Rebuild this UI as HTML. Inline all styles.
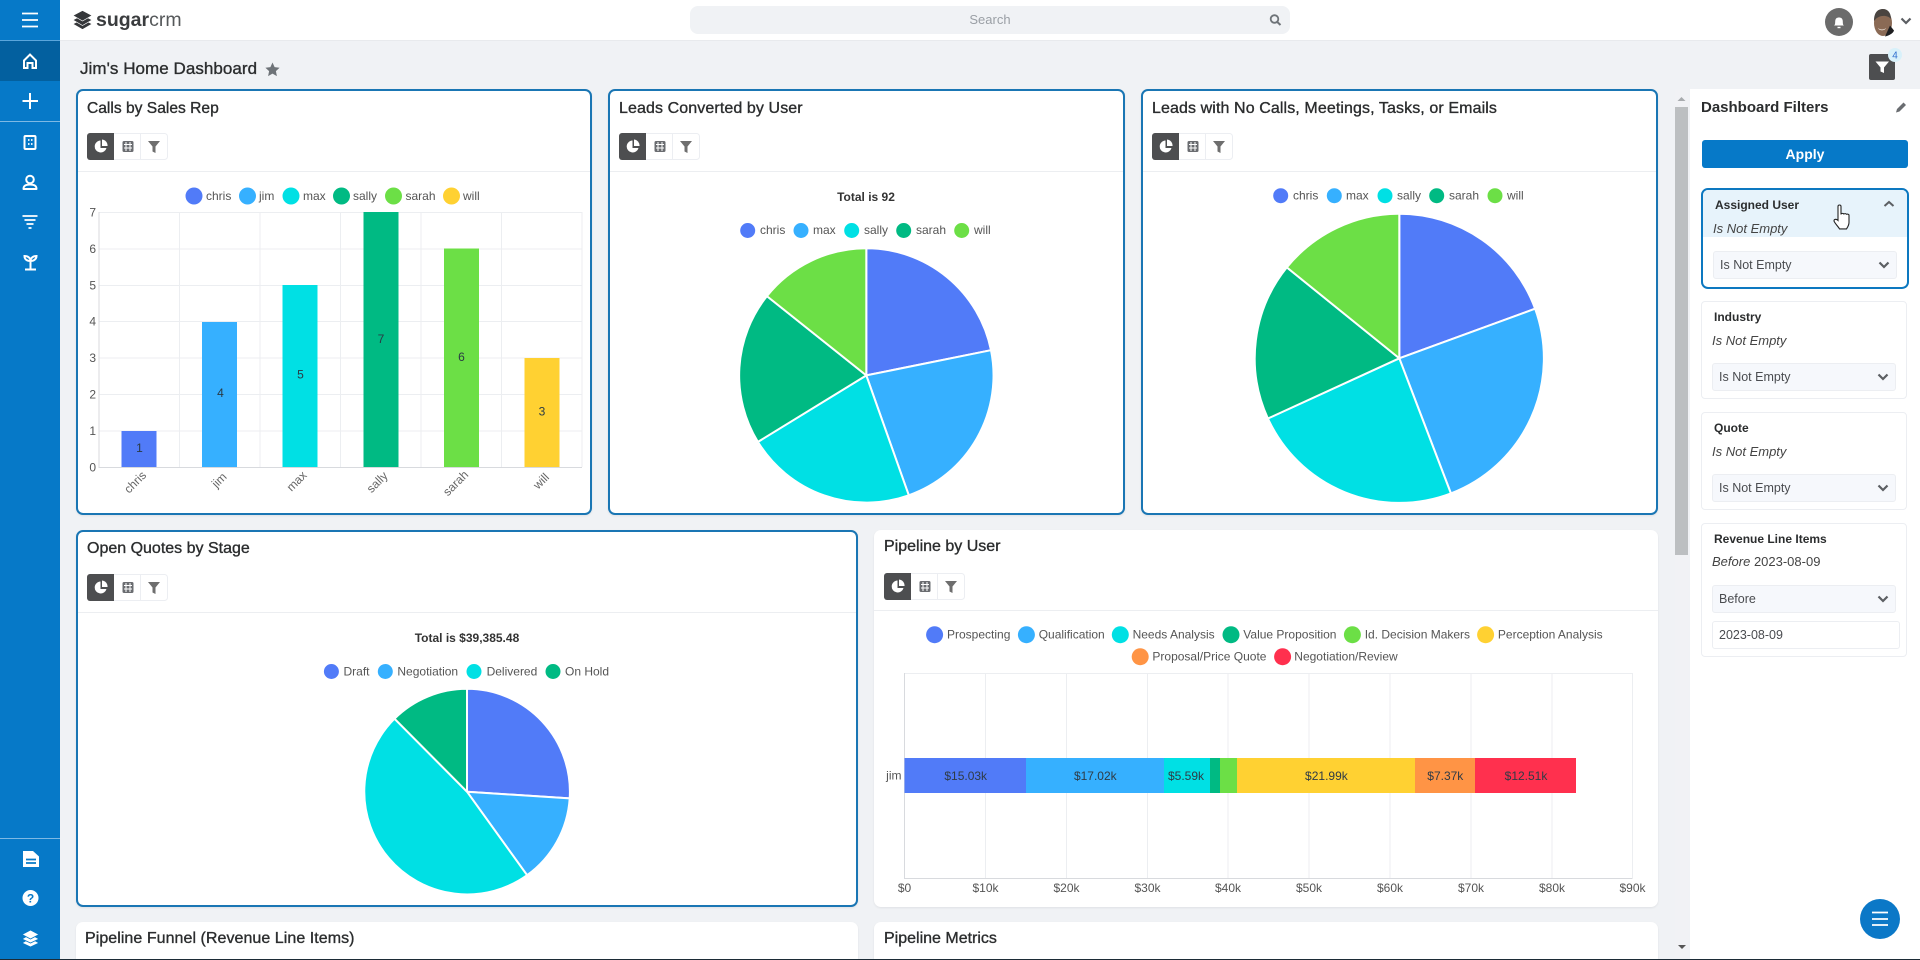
<!DOCTYPE html>
<html lang="en"><head><meta charset="utf-8"><title>Jim's Home Dashboard</title>
<style>
*{box-sizing:border-box}
html,body{margin:0;padding:0;width:1920px;height:960px;overflow:hidden;background:#f0f2f5;font-family:"Liberation Sans",sans-serif;color:#2b2d2e}
#root{position:absolute;left:0;top:0;width:1920px;height:960px;overflow:hidden}
.a{position:absolute}
.card{position:absolute;background:#fff;border-radius:7px;box-shadow:0 1px 2px rgba(0,0,0,.07)}
.sel{border:2px solid #1a76b4}
.t{position:absolute;font-size:16px;line-height:18px;white-space:nowrap;-webkit-text-stroke:.35px #2b2d2e;color:#2b2d2e}
.sep{position:absolute;height:1px;background:#eceef1}
.f{position:absolute;left:1701px;width:206px;background:#fff;border:1px solid #eceef2;border-radius:4px}
.ft{position:absolute;left:1714px;font-size:12px;font-weight:700;line-height:14px;white-space:nowrap;color:#2b2d2e}
.fi{position:absolute;left:1712px;font-size:13px;font-style:italic;line-height:16px;white-space:nowrap;color:#444}
.s{position:absolute;left:1712px;width:184px;height:28px;background:#f6f8fc;border:1px solid #eceef2;border-radius:3px;font-size:12.5px;line-height:26px;padding-left:6px;color:#4a4c50}
svg text{font-family:"Liberation Sans",sans-serif}
</style></head><body><div id="root">

<!-- header -->
<div class="a" style="left:0;top:0;width:1920px;height:41px;background:#fff;border-bottom:1px solid #e8eaed"></div>
<div class="a" style="left:690px;top:6px;width:600px;height:28px;background:#f0f2f5;border-radius:8px"></div>
<div class="a" style="left:690px;top:6px;width:600px;height:28px;line-height:28px;text-align:center;font-size:13px;color:#9a9fa5">Search</div>
<div class="a" style="left:96px;top:8px;font-size:19.5px;line-height:24px;white-space:nowrap;color:#3a3c3e"><b>sugar</b><span style="color:#55585a">crm</span></div>

<!-- sidebar -->
<div class="a" style="left:0;top:0;width:60px;height:960px;background:#0679c8"></div>
<div class="a" style="left:0;top:41px;width:60px;height:40px;background:#03609f"></div>
<div class="a" style="left:0;top:40px;width:60px;height:1px;background:#5aa6dc"></div>
<div class="a" style="left:0;top:121px;width:60px;height:1px;background:#7db9e4"></div>
<div class="a" style="left:0;top:838px;width:60px;height:1px;background:#7db9e4"></div>

<!-- dashboard title -->
<div class="a" style="left:80px;top:59px;font-size:17px;line-height:20px;white-space:nowrap;-webkit-text-stroke:.35px #2b2d2e;letter-spacing:.05px">Jim's Home Dashboard</div>

<!-- cards -->
<div class="card sel" style="left:76px;top:89px;width:516px;height:426px"></div>
<div class="card sel" style="left:608px;top:89px;width:517px;height:426px"></div>
<div class="card sel" style="left:1141px;top:89px;width:517px;height:426px"></div>
<div class="card sel" style="left:76px;top:530px;width:782px;height:377px"></div>
<div class="card" style="left:874px;top:530px;width:784px;height:377px"></div>
<div class="card" style="left:76px;top:922px;width:782px;height:38px;border-radius:7px 7px 0 0"></div>
<div class="card" style="left:874px;top:922px;width:784px;height:38px;border-radius:7px 7px 0 0"></div>

<div class="t" style="left:87px;top:100px;font-size:15.6px">Calls by Sales Rep</div>
<div class="t" style="left:619px;top:100px;letter-spacing:.1px">Leads Converted by User</div>
<div class="t" style="left:1152px;top:100px;letter-spacing:.1px">Leads with No Calls, Meetings, Tasks, or Emails</div>
<div class="t" style="left:87px;top:540px">Open Quotes by Stage</div>
<div class="t" style="left:884px;top:538px">Pipeline by User</div>
<div class="t" style="left:85px;top:930px;letter-spacing:.05px">Pipeline Funnel (Revenue Line Items)</div>
<div class="t" style="left:884px;top:930px">Pipeline Metrics</div>

<div class="sep" style="left:78px;top:171px;width:512px"></div>
<div class="sep" style="left:610px;top:171px;width:513px"></div>
<div class="sep" style="left:1143px;top:171px;width:513px"></div>
<div class="sep" style="left:78px;top:612px;width:778px"></div>
<div class="sep" style="left:874px;top:610px;width:784px"></div>

<!-- scrollbar + panel -->
<div class="a" style="left:1675px;top:89px;width:14px;height:871px;background:#f1f2f5"></div>
<div class="a" style="left:1675px;top:107px;width:13px;height:448px;background:#bcbfc1"></div>
<div class="a" style="left:1690px;top:89px;width:230px;height:871px;background:#fff"></div>
<div class="a" style="left:1701px;top:98px;font-size:15px;font-weight:700;line-height:20px;white-space:nowrap;color:#2b2d2e">Dashboard Filters</div>
<div class="a" style="left:1702px;top:140px;width:206px;height:28px;background:#0679c8;border-radius:3px;color:#fff;font-weight:700;font-size:14px;line-height:28px;text-align:center">Apply</div>

<!-- filters -->
<div class="a" style="left:1701px;top:188px;width:208px;height:101px;background:#fff;border:2px solid #0d78c0;border-radius:7px;overflow:hidden"><div style="height:47px;background:#e7f3fb"></div></div>
<div class="ft" style="left:1715px;top:198px">Assigned User</div>
<div class="fi" style="left:1713px;top:221px">Is Not Empty</div>
<div class="s" style="left:1713px;top:251px">Is Not Empty</div>

<div class="f" style="top:301px;height:98px"></div>
<div class="ft" style="top:310px">Industry</div>
<div class="fi" style="top:333px">Is Not Empty</div>
<div class="s" style="top:363px">Is Not Empty</div>

<div class="f" style="top:412px;height:98px"></div>
<div class="ft" style="top:421px">Quote</div>
<div class="fi" style="top:444px">Is Not Empty</div>
<div class="s" style="top:474px">Is Not Empty</div>

<div class="f" style="top:523px;height:134px"></div>
<div class="ft" style="top:532px">Revenue Line Items</div>
<div class="fi" style="top:554px"><i>Before</i> <span style="font-style:normal">2023-08-09</span></div>
<div class="s" style="top:585px">Before</div>
<div class="s" style="top:621px;width:188px;background:#fff">2023-08-09</div>

<!-- all graphics -->
<svg class="a" style="left:0;top:0" width="1920" height="960" viewBox="0 0 1920 960" xmlns="http://www.w3.org/2000/svg">
<defs>
<symbol id="tb" viewBox="0 0 81 27" width="81" height="27">
<rect x=".5" y=".5" width="80" height="26" rx="3" fill="#fff" stroke="#eceef2"/>
<path d="M3 0H27V27H3a3 3 0 0 1-3-3V3A3 3 0 0 1 3 0z" fill="#4d4e50"/>
<path d="M13.500 7.500a6 6 0 1 0 6 7.500h-6z" fill="#fff"/><path d="M15 6.500a6 6 0 0 1 5.500 6.500H15z" fill="#fff"/>
<path d="M53.500 1V26" stroke="#eceef2"/>
<rect x="35.500" y="8" width="11" height="11" rx="1.500" fill="#6a6c70"/>
<path d="M37 11.500h8M37 15h8M39 9v9M43 9v9" stroke="#fff" stroke-width="1"/>
<path d="M61 8h12l-4.500 5.500V20l-3-1.500v-5z" fill="#6e6e6e"/>
</symbol>
<symbol id="chev" viewBox="0 0 12 8" width="12" height="8"><path d="M1.500 1.500L6 6l4.500-4.500" fill="none" stroke="#5c5f63" stroke-width="2.200"/></symbol>
</defs>

<!-- sidebar icons -->
<g fill="none" stroke="#fff" stroke-width="2">
<path d="M22 13.500H38M22 20H38M22 26.500H38" stroke-width="1.800"/>
<path d="M24 60.500L30 54.500L36 60.500V68H32.500V63H27.500V68H24Z" stroke-width="2"/>
<path d="M22.500 101H38M30 93V109" stroke-width="2"/>
<rect x="24.500" y="136" width="11" height="13" rx="1"/>
<path d="M28 140h1.500M31 140h1.500M28 144h1.500M31 144h1.500" stroke-width="1.800"/>
<circle cx="30" cy="179.500" r="3.800"/>
<path d="M23.500 189H36.500M23.500 189C23.500 185.500 26 184.500 30 184.500S36.500 185.500 36.500 189" stroke-linecap="round"/>
<path d="M22.500 216H37.500M24.500 220H35.500M26.500 224H33.500M28.500 228H31.500" stroke-width="1.800"/>
<path d="M30.500 269V261M25 269.500H36M30.500 261C26.500 261 24.500 259 24.500 256C28 256 30.500 258 30.500 261ZM30.500 261C34 261 36.500 259 36.500 256C33 256 30.500 258 30.500 261Z"/>
</g>
<path d="M23 851H33L39 856.500V867H23Z" fill="#fff"/><path d="M26 859.500h10M26 863h10" stroke="#0679c8" stroke-width="1.800"/>
<circle cx="30.500" cy="898" r="8" fill="#fff"/><text x="30.500" y="902.500" text-anchor="middle" font-size="12" font-weight="700" fill="#0679c8">?</text>
<g fill="#fff" stroke="#0679c8" stroke-width=".8"><path d="M30.500 938L22 943L30.500 947L39 943Z"/><path d="M30.500 934L22 939L30.500 943L39 939Z"/><path d="M30.500 930L22 934.500L30.500 939L39 934.500Z"/></g>

<!-- logo -->
<g fill="#35373a" stroke="#fff" stroke-width=".7"><path d="M82.500 19L73 24L82.500 29.500L92 24Z"/><path d="M82.500 15L73 20L82.500 25.500L92 20Z"/><path d="M82.500 10.500L73 15.500L82.500 21L92 15.500Z"/></g>

<!-- search icon -->
<circle cx="1274.500" cy="19" r="3.800" fill="none" stroke="#6e7378" stroke-width="1.800"/><path d="M1277.300 22L1280.500 25" stroke="#6e7378" stroke-width="2"/>

<!-- bell -->
<circle cx="1839" cy="22" r="14" fill="#6b6b6b"/>
<path d="M1834 25.500c1.500-1 1-3 1.300-5 .3-2 1.500-3 3.700-3s3.400 1 3.700 3c.3 2-.2 4 1.300 5z" fill="#fff"/><path d="M1837.500 27.500h3" stroke="#fff" stroke-width="1.400"/>

<!-- avatar -->
<ellipse cx="1883" cy="23" rx="9" ry="13" fill="#8a6a55"/>
<path d="M1874 21c0-9 4-12 9-12s8 4 8 10c-3-4-12-5-17 2z" fill="#4a4440"/>
<path d="M1885 36.500c4-1 8-3 9-6l-4-5z" fill="#1e1e20"/>
<path d="M1878 28c2 2 6 2 8 0-1 3-7 3-8 0z" fill="#efe6de"/>
<use href="#chev" x="1900" y="17"/>

<!-- filter button -->
<rect x="1869" y="54" width="26" height="26" rx="2" fill="#4d4e50"/>
<path d="M1875.500 61.500h13.500l-5 6v5.500l-3.500-1.500v-4z" fill="#fff"/>
<circle cx="1895" cy="55" r="7" fill="#d8f1fa"/><text x="1895" y="58.500" text-anchor="middle" font-size="10" fill="#2f6fd0">4</text>

<!-- star -->
<path d="M272.500 62.500l2.100 4.600 5 .6-3.700 3.400 1 5-4.400-2.500-4.400 2.500 1-5-3.700-3.400 5-.6z" fill="#6e7378"/>

<!-- scroll arrows -->
<path d="M1677.500 101l4-4 4 4z" fill="#a8abae"/><path d="M1678 945l4 4 4-4z" fill="#555"/>

<!-- pencil -->
<path d="M1896 112.500l1-3.500 6.500-6.500 2.500 2.500-6.500 6.500z" fill="#6a6d71"/>

<!-- chevrons -->
<path d="M1884.500 206l4.500-4 4.500 4" fill="none" stroke="#5c5f63" stroke-width="2"/>
<use href="#chev" x="1878" y="261"/><use href="#chev" x="1877" y="373"/><use href="#chev" x="1877" y="484"/><use href="#chev" x="1877" y="595"/>

<!-- toolbars -->
<use href="#tb" x="87" y="133"/><use href="#tb" x="619" y="133"/><use href="#tb" x="1152" y="133"/><use href="#tb" x="87" y="574"/><use href="#tb" x="884" y="573"/>

<!-- bar chart -->
<g stroke="#eceef1" stroke-width="1" fill="none">
<path d="M99 212.500H582M99 249H582M99 285.500H582M99 321.500H582M99 358H582M99 394.500H582M99 431H582"/>
<path d="M179.500 212V467M260 212V467M340.500 212V467M421 212V467M501.500 212V467M582 212V467"/>
</g>
<path d="M99 212V467.500H582" fill="none" stroke="#d8dade"/>
<rect x="121.500" y="431" width="35" height="36" fill="#517bf8"/>
<rect x="202" y="322" width="35" height="145" fill="#36b0ff"/>
<rect x="282.500" y="285" width="35" height="182" fill="#00e0e4"/>
<rect x="363.500" y="212" width="35" height="255" fill="#00ba83"/>
<rect x="444" y="248.500" width="35" height="218.500" fill="#6cdf46"/>
<rect x="524.500" y="358" width="35" height="109" fill="#ffd132"/>
<g font-size="12" fill="#2a3a44" text-anchor="middle">
<text x="139.500" y="452">1</text><text x="220.500" y="397">4</text><text x="300.500" y="378.500">5</text><text x="381" y="343">7</text><text x="461.500" y="361">6</text><text x="542" y="415.500">3</text>
</g>
<g font-size="12" fill="#555" text-anchor="end">
<text x="96" y="216.500">7</text><text x="96" y="253">6</text><text x="96" y="289.500">5</text><text x="96" y="325.500">4</text><text x="96" y="362">3</text><text x="96" y="398.500">2</text><text x="96" y="435">1</text><text x="96" y="471.500">0</text>
</g>
<g font-size="12" fill="#666" text-anchor="middle">
<text transform="translate(138,485) rotate(-45)">chris</text>
<text transform="translate(222,483) rotate(-45)">jim</text>
<text transform="translate(299.500,484) rotate(-45)">max</text>
<text transform="translate(380,485) rotate(-45)">sally</text>
<text transform="translate(458.500,486) rotate(-45)">sarah</text>
<text transform="translate(544,484) rotate(-45)">will</text>
</g>
<g font-size="12" fill="#555">
<circle cx="194" cy="196" r="8.500" fill="#517bf8"/><text x="206" y="200">chris</text>
<circle cx="247.500" cy="196" r="8.500" fill="#36b0ff"/><text x="259" y="200">jim</text>
<circle cx="291" cy="196" r="8.500" fill="#00e0e4"/><text x="303" y="200">max</text>
<circle cx="341.500" cy="196" r="8.500" fill="#00ba83"/><text x="353" y="200">sally</text>
<circle cx="393.500" cy="196" r="8.500" fill="#6cdf46"/><text x="405.500" y="200">sarah</text>
<circle cx="451.500" cy="196" r="8.500" fill="#ffd132"/><text x="463" y="200">will</text>
</g>

<!-- pie: leads converted -->
<text x="866" y="201" text-anchor="middle" font-size="12" font-weight="700" fill="#333">Total is 92</text>
<g font-size="12" fill="#555">
<circle cx="747.700" cy="230.500" r="7.500" fill="#517bf8"/><text x="760" y="234">chris</text>
<circle cx="801" cy="230.500" r="7.500" fill="#36b0ff"/><text x="813" y="234">max</text>
<circle cx="851.700" cy="230.500" r="7.500" fill="#00e0e4"/><text x="864" y="234">sally</text>
<circle cx="903.700" cy="230.500" r="7.500" fill="#00ba83"/><text x="916" y="234">sarah</text>
<circle cx="961.700" cy="230.500" r="7.500" fill="#6cdf46"/><text x="974" y="234">will</text>
</g>
<g stroke="#fff" stroke-width="2" stroke-linejoin="round" transform="translate(0,.7)">
<path d="M866.300 374.700L866.300 247.500A127.200 127.200 0 0 1 991 349.500Z" fill="#517bf8"/>
<path d="M866.300 374.700L991 349.500A127.200 127.200 0 0 1 908.800 494.600Z" fill="#36b0ff"/>
<path d="M866.300 374.700L908.800 494.600A127.200 127.200 0 0 1 757.900 441.200Z" fill="#00e0e4"/>
<path d="M866.300 374.700L757.900 441.200A127.200 127.200 0 0 1 766.900 295.400Z" fill="#00ba83"/>
<path d="M866.300 374.700L766.900 295.400A127.200 127.200 0 0 1 866.300 247.500Z" fill="#6cdf46"/>
</g>

<!-- pie: leads no calls -->
<g font-size="12" fill="#555">
<circle cx="1280.700" cy="195.700" r="7.500" fill="#517bf8"/><text x="1293" y="199.500">chris</text>
<circle cx="1334.300" cy="195.700" r="7.500" fill="#36b0ff"/><text x="1346" y="199.500">max</text>
<circle cx="1385" cy="195.700" r="7.500" fill="#00e0e4"/><text x="1397" y="199.500">sally</text>
<circle cx="1436.700" cy="195.700" r="7.500" fill="#00ba83"/><text x="1449" y="199.500">sarah</text>
<circle cx="1495" cy="195.700" r="7.500" fill="#6cdf46"/><text x="1507" y="199.500">will</text>
</g>
<g stroke="#fff" stroke-width="2" stroke-linejoin="round">
<path d="M1399.300 358.300L1399.300 213.700A144.600 144.600 0 0 1 1535.100 308.700Z" fill="#517bf8"/>
<path d="M1399.300 358.300L1535.100 308.700A144.600 144.600 0 0 1 1450.900 493.400Z" fill="#36b0ff"/>
<path d="M1399.300 358.300L1450.900 493.400A144.600 144.600 0 0 1 1267.900 418.500Z" fill="#00e0e4"/>
<path d="M1399.300 358.300L1267.900 418.500A144.600 144.600 0 0 1 1286.800 267.400Z" fill="#00ba83"/>
<path d="M1399.300 358.300L1286.800 267.400A144.600 144.600 0 0 1 1399.300 213.700Z" fill="#6cdf46"/>
</g>

<!-- pie: open quotes -->
<text x="467" y="642" text-anchor="middle" font-size="12" font-weight="700" fill="#333">Total is $39,385.48</text>
<g font-size="12" fill="#555">
<circle cx="331.400" cy="671.500" r="7.500" fill="#517bf8"/><text x="343.500" y="675.500">Draft</text>
<circle cx="385.300" cy="671.500" r="7.500" fill="#36b0ff"/><text x="397.400" y="675.500">Negotiation</text>
<circle cx="474" cy="671.500" r="7.500" fill="#00e0e4"/><text x="486.600" y="675.500">Delivered</text>
<circle cx="553" cy="671.500" r="7.500" fill="#00ba83"/><text x="565" y="675.500">On Hold</text>
</g>
<g stroke="#fff" stroke-width="2" stroke-linejoin="round">
<path d="M467 791.700L467 688.800A102.900 102.900 0 0 1 569.700 798.400Z" fill="#517bf8"/>
<path d="M467 791.700L569.700 798.400A102.900 102.900 0 0 1 527.100 875.200Z" fill="#36b0ff"/>
<path d="M467 791.700L527.100 875.200A102.900 102.900 0 0 1 394.500 718.700Z" fill="#00e0e4"/>
<path d="M467 791.700L394.500 718.700A102.900 102.900 0 0 1 467 688.800Z" fill="#00ba83"/>
</g>

<!-- pipeline -->
<g font-size="12" fill="#555">
<circle cx="934.600" cy="634.700" r="8.500" fill="#517bf8"/><text x="947" y="638.500">Prospecting</text>
<circle cx="1026.400" cy="634.700" r="8.500" fill="#36b0ff"/><text x="1038.700" y="638.500">Qualification</text>
<circle cx="1120.300" cy="634.700" r="8.500" fill="#00e0e4"/><text x="1132.600" y="638.500">Needs Analysis</text>
<circle cx="1231" cy="634.700" r="8.500" fill="#00ba83"/><text x="1243.300" y="638.500">Value Proposition</text>
<circle cx="1352.400" cy="634.700" r="8.500" fill="#6cdf46"/><text x="1364.700" y="638.500">Id. Decision Makers</text>
<circle cx="1485.600" cy="634.700" r="8.500" fill="#ffd132"/><text x="1497.900" y="638.500">Perception Analysis</text>
<circle cx="1140.200" cy="656.700" r="8.500" fill="#ff9445"/><text x="1152.400" y="660.500">Proposal/Price Quote</text>
<circle cx="1282.600" cy="656.700" r="8.500" fill="#ff304e"/><text x="1294.300" y="660.500">Negotiation/Review</text>
</g>
<path d="M985.500 673V878M1066.500 673V878M1147.500 673V878M1228 673V878M1309 673V878M1390 673V878M1471 673V878M1552 673V878M1632.500 673V878M905 673.500H1632.500" fill="none" stroke="#eceef1"/>
<path d="M904.500 673V878.500H1632.500" fill="none" stroke="#d8dade"/>
<rect x="904.500" y="758" width="121.500" height="35" fill="#517bf8"/>
<rect x="1026" y="758" width="138" height="35" fill="#36b0ff"/>
<rect x="1164" y="758" width="46" height="35" fill="#00e0e4"/>
<rect x="1210" y="758" width="10" height="35" fill="#00ba83"/>
<rect x="1220" y="758" width="17" height="35" fill="#6cdf46"/>
<rect x="1237" y="758" width="178" height="35" fill="#ffd132"/>
<rect x="1415" y="758" width="60" height="35" fill="#ff9445"/>
<rect x="1475" y="758" width="101" height="35" fill="#ff304e"/>
<g font-size="12" fill="#2f3b46" text-anchor="middle">
<text x="965.700" y="780">$15.03k</text><text x="1095.300" y="780">$17.02k</text><text x="1186" y="780">$5.59k</text><text x="1326.400" y="780">$21.99k</text><text x="1445.300" y="780">$7.37k</text><text x="1526" y="780">$12.51k</text>
</g>
<text x="901.500" y="779.500" text-anchor="end" font-size="12" fill="#555">jim</text>
<g font-size="12" fill="#555" text-anchor="middle">
<text x="904.500" y="892">$0</text><text x="985.500" y="892">$10k</text><text x="1066.500" y="892">$20k</text><text x="1147.500" y="892">$30k</text><text x="1228" y="892">$40k</text><text x="1309" y="892">$50k</text><text x="1390" y="892">$60k</text><text x="1471" y="892">$70k</text><text x="1552" y="892">$80k</text><text x="1632.500" y="892">$90k</text>
</g>

<!-- hand cursor -->
<path d="M1838 206.500c0-2 3-2 3 0v8c0-1.500 2.800-1.500 2.800 0 0-1.200 2.700-1.200 2.700.3 0-1 2.500-1 2.500.6v7c0 3-1.500 5-2.500 6.500h-7c-1-2-5.500-6.500-5.500-8 0-2 2.500-2 4-.5z" fill="#fff" stroke="#222" stroke-width="1.100"/>

<!-- fab -->
<circle cx="1880" cy="919" r="20" fill="#0b78c7"/>
<path d="M1872 912.500H1888M1872 919H1888M1872 925H1888" stroke="#fff" stroke-width="1.800"/>
</svg>

<div class="a" style="left:0;top:959px;width:1920px;height:1px;background:#1c2b36"></div>
</div></body></html>
